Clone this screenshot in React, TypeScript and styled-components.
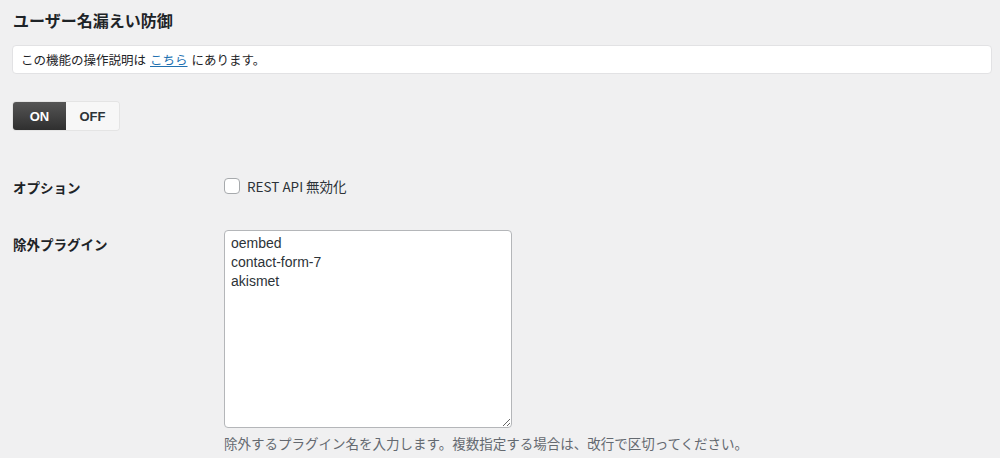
import React from "react";
import styled, { createGlobalStyle } from "styled-components";

const GlobalStyle = createGlobalStyle`
  html, body {
    margin: 0;
    padding: 0;
    background: #f0f0f1;
    font-family: "Noto Sans CJK JP", "Liberation Sans", sans-serif;
    color: #1d2327;
  }
`;

const Page = styled.div`
  padding: 8px 8px 0 12px;
`;

const Title = styled.h2`
  margin: 0 0 0 1px;
  font-size: 16px;
  font-weight: 700;
  line-height: 24px;
`;

const Notice = styled.div`
  margin-top: 13px;
  background: #fff;
  border: 1px solid #e2e2e4;
  border-radius: 4px;
  padding: 0 8px;
  height: 27px;
  display: flex;
  align-items: center;
  font-size: 12.5px;
  width: 962px;
`;

const NoticeLink = styled.a`
  color: #2271b1;
  text-decoration: underline;
  margin: 0 4px;
`;

const Toggle = styled.div`
  margin-top: 28px;
  margin-left: 1px;
  display: inline-flex;
  border-radius: 3px;
  overflow: hidden;
  box-shadow: 0 0 0 1px #e4e4e4;
`;

const ToggleButton = styled.button<{ $active?: boolean }>`
  width: 53px;
  height: 28px;
  border: 0;
  font-family: "Liberation Sans", sans-serif;
  font-weight: 700;
  font-size: 13px;
  cursor: pointer;
  color: ${(p) => (p.$active ? "#fff" : "#2c3338")};
  background: ${(p) =>
    p.$active ? "linear-gradient(#555, #2f2f2f)" : "#f7f7f7"};
`;

const Form = styled.div`
  margin-top: 45px;
  display: grid;
  grid-template-columns: 212px 1fr;
  row-gap: 35px;
`;

const Label = styled.div`
  font-size: 13.5px;
  font-weight: 700;
  padding-left: 1px;
  padding-top: 2px;
`;

const CheckRow = styled.label`
  display: flex;
  align-items: center;
  gap: 7px;
  font-size: 13.5px;
  color: #2c3338;
`;

const Box = styled.span`
  width: 14px;
  height: 14px;
  border: 1px solid #a7aaad;
  border-radius: 4px;
  background: #fff;
`;

const Field = styled.div`
  display: flex;
  flex-direction: column;
  margin-top: -2px;
`;

const Area = styled.textarea`
  width: 288px;
  height: 198px;
  box-sizing: border-box;
  border: 1px solid #b4b6b9;
  border-radius: 4px;
  padding: 3px 6px;
  font-family: "Liberation Sans", sans-serif;
  font-size: 14px;
  line-height: 19px;
  color: #2c3338;
  resize: vertical;
  outline: none;
`;

const Help = styled.p`
  margin: 5px 0 0;
  font-size: 13.5px;
  color: #646970;
`;

export default function App() {
  return (
    <Page>
      <GlobalStyle />
      <Title>ユーザー名漏えい防御</Title>
      <Notice>
        この機能の操作説明は<NoticeLink href="#">こちら</NoticeLink>にあります。
      </Notice>
      <Toggle>
        <ToggleButton $active>ON</ToggleButton>
        <ToggleButton>OFF</ToggleButton>
      </Toggle>
      <Form>
        <Label>オプション</Label>
        <CheckRow>
          <Box />
          REST API 無効化
        </CheckRow>
        <Label>除外プラグイン</Label>
        <Field>
          <Area defaultValue={"oembed\ncontact-form-7\nakismet"} />
          <Help>
            除外するプラグイン名を入力します。複数指定する場合は、改行で区切ってください。
          </Help>
        </Field>
      </Form>
    </Page>
  );
}
